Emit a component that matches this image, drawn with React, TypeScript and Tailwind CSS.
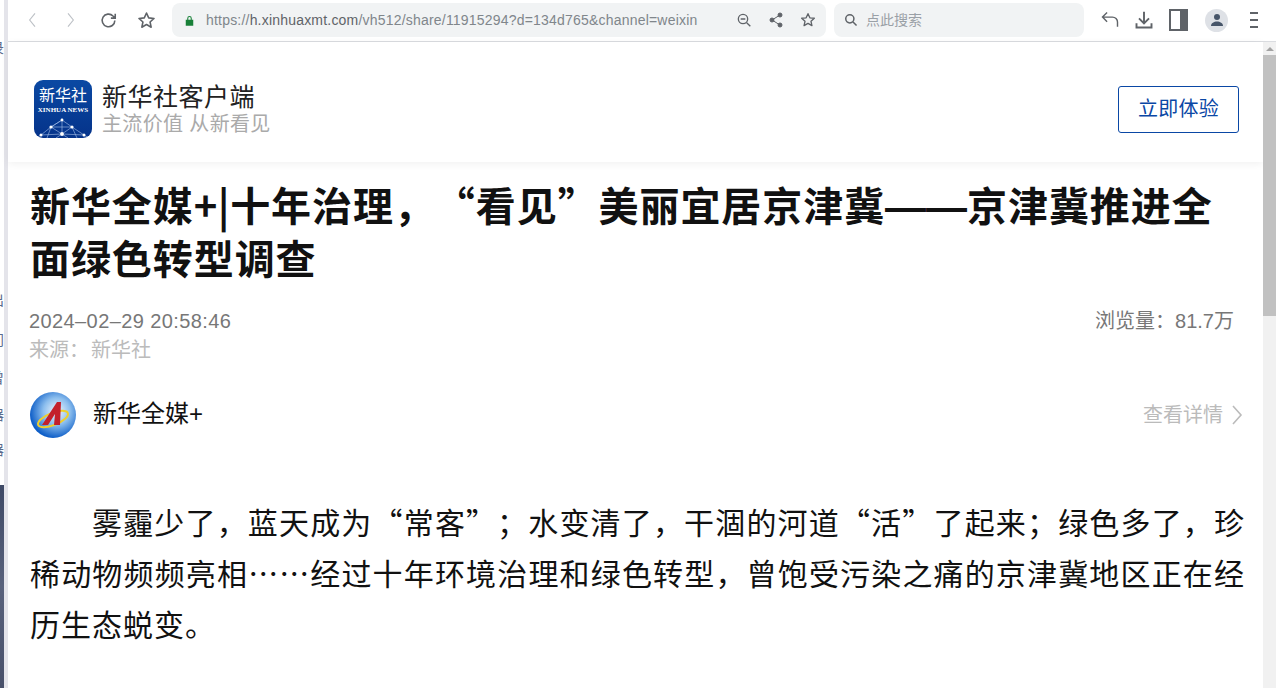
import React from "react";

const cjk = "font-['Liberation_Sans','Noto_Sans_CJK_SC',sans-serif]";
const cjkFirst = "font-['Noto_Sans_CJK_SC','Liberation_Sans',sans-serif]";
const latin = "font-['Liberation_Sans',sans-serif]";

const XinhuaLogo = () => (
  <div className="flex h-[58px] w-[58px] shrink-0 flex-col items-center overflow-hidden rounded-[9px] bg-gradient-to-b from-[#0b49a3] to-[#05338a]">
    <span className="mt-[6px] text-[16px] leading-[20px] text-white">新华社</span>
    <span className="font-['Liberation_Serif',serif] text-[7px] leading-[8px] font-bold whitespace-nowrap text-white">XINHUA NEWS</span>
    <svg viewBox="0 0 58 24" className="h-[24px] w-[58px]" stroke="#a9c3ea" strokeWidth="0.6" fill="none">
      <path d="M7 21 17 13 28 6 38 13 50 21M17 13 28 20 38 13M17 13 28 6M7 21 28 20 50 21M28 6V20M17 13 13 24M38 13 43 24M7 21 2 24M50 21 55 24M17 13H38M28 20 22 24M28 20 34 24" />
      <g fill="#fff" stroke="none">
        <circle cx="28" cy="6" r="1.4" />
        <circle cx="17" cy="13" r="1.6" />
        <circle cx="38" cy="13" r="1.6" />
        <circle cx="7" cy="21" r="1.5" />
        <circle cx="28" cy="20" r="1.9" />
        <circle cx="50" cy="21" r="1.5" />
      </g>
    </svg>
  </div>
);

const MediaLogo = () => (
  <svg viewBox="0 0 46 46" className="h-[46px] w-[46px] shrink-0">
    <defs>
      <radialGradient id="mediaBg" cx="58%" cy="42%" r="58%">
        <stop offset="0" stopColor="#f2f7fd" />
        <stop offset="0.5" stopColor="#8dbfee" />
        <stop offset="1" stopColor="#0f5fc8" />
      </radialGradient>
    </defs>
    <circle cx="23" cy="23" r="23" fill="url(#mediaBg)" />
    <ellipse cx="23" cy="27" rx="16" ry="6" fill="none" stroke="#efcf2c" strokeWidth="2" transform="rotate(-22 23 27)" />
    <path d="M12 33 27 10h4l-1 23h-6l1-11-7 11z" fill="#c3202b" />
  </svg>
);

const ToolIcon = ({ children, className = "" }: { children: React.ReactNode; className?: string }) => (
  <svg viewBox="0 0 24 24" className={className} fill="none" stroke="currentColor" strokeWidth="2">
    {children}
  </svg>
);

const Star = ({ className }: { className: string }) => (
  <ToolIcon className={className}>
    <path d="m12 2.500 2.800 6.200 6.700.7-5 4.500 1.400 6.600-5.900-3.400-5.900 3.400 1.400-6.600-5-4.500 6.700-.7z" strokeLinejoin="round" />
  </ToolIcon>
);

const Toolbar = () => (
  <div className="flex h-[42px] items-center border-b border-[#dadce0] bg-white pb-[1px]">
    <div className="flex w-[164px] items-center pl-[17px] text-[#5f6368]">
      <ToolIcon className="h-[16px] w-[16px] text-[#bdc1c6]"><path d="m15 2-8 10 8 10" strokeWidth="1.7" /></ToolIcon>
      <ToolIcon className="ml-[21px] h-[16px] w-[16px] text-[#bdc1c6]"><path d="m9 2 8 10-8 10" strokeWidth="1.7" /></ToolIcon>
      <ToolIcon className="ml-[21px] h-[19px] w-[19px]">
        <path d="M20 12a8 8 0 1 1-2.300-5.700L20.500 9M20.500 3.500V9H15" />
      </ToolIcon>
      <Star className="ml-[19px] h-[19px] w-[19px]" />
    </div>
    <div className="flex h-[34px] w-[654px] items-center rounded-[8px] bg-[#f1f3f4] pl-[13px]">
      <svg viewBox="0 0 12 14" className="h-[11px] w-[9px] shrink-0" fill="#188038">
        <path d="M1 6h10v8H1zM3 6V4a3 3 0 0 1 6 0v2H7.600V4a1.600 1.600 0 0 0-3.200 0v2z" />
      </svg>
      <span className={`ml-[12px] w-[514px] text-[14px] tracking-[0.2px] whitespace-nowrap text-[#80868b] ${latin}`}>
        https://<span className="text-[#5f6368]">h.xinhuaxmt.com</span>/vh512/share/11915294?d=134d765&amp;channel=weixin
      </span>
      <ToolIcon className="ml-[16px] h-[16px] w-[16px] text-[#5f6368]">
        <circle cx="10.500" cy="10.500" r="7" /><path d="m16 16 5.500 5.500M7 10.500h7" />
      </ToolIcon>
      <svg viewBox="0 0 16 16" className="ml-[16px] h-[16px] w-[16px] text-[#5f6368]" fill="currentColor" stroke="currentColor" strokeWidth="1">
        <path d="M12 3 4 8l8 5" fill="none" />
        <circle cx="12" cy="3" r="2" /><circle cx="4" cy="8" r="2" /><circle cx="12" cy="13" r="2" />
      </svg>
      <Star className="ml-[16px] h-[16px] w-[16px] text-[#5f6368]" />
    </div>
    <div className="ml-[8px] flex h-[34px] w-[250px] items-center rounded-[8px] bg-[#f1f3f4] pl-[10px]">
      <ToolIcon className="h-[14px] w-[14px] text-[#5f6368]">
        <circle cx="10" cy="10" r="7" strokeWidth="2.600" /><path d="m15.500 15.500 6 6" strokeWidth="2.600" />
      </ToolIcon>
      <span className={`ml-[8px] text-[14px] text-[#9aa0a6] ${cjk}`}>点此搜索</span>
    </div>
    <div className="flex flex-1 items-center pl-[16px] text-[#5f6368]">
      <ToolIcon className="h-[20px] w-[20px]"><path d="M8.500 3 3 8.500 8.500 14M3.500 8.500H15a6 6 0 0 1 6 6V20" strokeWidth="1.700" /></ToolIcon>
      <ToolIcon className="ml-[14px] h-[20px] w-[20px]"><path d="M12 2v14M6 10l6 6 6-6M3 16v5h18v-5" strokeWidth="2.300" /></ToolIcon>
      <div className="ml-[15px] flex h-[22px] w-[19px] items-center border-[2px] border-[#5f6368] bg-[#5f6368]">
        <div className="h-full w-[9px] bg-white" />
      </div>
      <div className="ml-[17px] flex h-[23px] w-[23px] items-center justify-center rounded-full bg-[#dee1e6]">
        <svg viewBox="0 0 14 14" className="h-[14px] w-[14px]" fill="#475569">
          <circle cx="7" cy="4" r="3" /><path d="M1 13c0-3 3-4.500 6-4.500s6 1.500 6 4.500z" />
        </svg>
      </div>
      <div className="ml-[22px] flex flex-col gap-[5px]">
        <div className="h-[2px] w-[8px] bg-[#5f6368]" />
        <div className="h-[2px] w-[8px] bg-[#5f6368]" />
        <div className="h-[2px] w-[8px] bg-[#5f6368]" />
      </div>
    </div>
  </div>
);

// what shows of the window behind the browser
const behindText = [
  { text: "录", height: "h-[56px]" },
  { text: "出", height: "h-[252px]" },
  { text: "门", height: "h-[40px]" },
  { text: "曾", height: "h-[38px]" },
  { text: "器", height: "h-[37px]" },
  { text: "器", height: "h-[35px]" },
];

const SideStrip = () => (
  <div className="flex h-full w-[8px] shrink-0">
    <div className="flex w-[4px] flex-col overflow-hidden bg-white">
      <div className="flex h-[485px] flex-col text-[14px] leading-[16px] text-[#5b6b8c]">
        {behindText.map((item, i) => (
          <div key={i} className={`flex ${item.height} shrink-0 items-end justify-end overflow-hidden`}>
            <span className="shrink-0">{item.text}</span>
          </div>
        ))}
      </div>
      <div className="flex-1 bg-gradient-to-b from-[#3f4a66] via-[#59627c] to-[#48506a]" />
    </div>
    <div className="w-[4px] bg-[#e4e4ea]" />
  </div>
);

const Scrollbar = () => (
  <div className="flex h-full w-[13px] shrink-0 flex-col items-center bg-[#f1f1f1] pt-[5px]">
    <div className="h-0 w-0 border-x-[4px] border-b-[4px] border-x-transparent border-b-[#a3a3a3]" />
    <div className="mt-[4px] h-[261px] w-full bg-[#c1c1c1]" />
  </div>
);

export default function App() {
  return (
    <div className={`flex h-[688px] w-[1276px] flex-col overflow-hidden bg-white ${cjk}`}>
      <div className="flex h-full">
        <SideStrip />
        <div className="flex min-w-0 flex-1 flex-col">
          <Toolbar />
          <div className="flex min-h-0 flex-1">
            <main className="min-w-0 flex-1">
              {/* app banner */}
              <header className="flex h-[120px] items-center justify-between pr-[24px] pl-[26px] shadow-[0_2px_8px_rgba(0,0,0,0.06)]">
                <div className="flex items-center gap-[10px] pt-[14px]">
                  <XinhuaLogo />
                  <div>
                    <div className="text-[25px] leading-[30px] tracking-[0.5px] text-[#222]">新华社客户端</div>
                    <div className="text-[20px] leading-[24px] tracking-[0.35px] text-[#aaa]">主流价值 从新看见</div>
                  </div>
                </div>
                <button className="mt-[14px] h-[47px] w-[121px] rounded-[3px] border border-[#0a47a5] text-[20px] tracking-[0.3px] text-[#0a47a5]">立即体验</button>
              </header>

              {/* article */}
              <article className="pr-[18px] pl-[22px]">
                <h1 className={`mt-[16px] text-[40px] leading-[53px] font-bold tracking-[0.93px] text-[#111] [text-spacing-trim:space-all] ${cjkFirst}`}>
                  新华全媒<span className="tracking-[0.5px]">+|</span>十年治理，“看见”美丽宜居京津冀<span className={`text-[41px] leading-none tracking-normal ${latin}`}>——</span>京津冀推进全面绿色转型调查
                </h1>
                <div className="mt-[23px] -ml-[1px] flex justify-between pr-[11px] text-[20px] leading-[28px] text-[#777]">
                  <span className="tracking-[0.4px]">2024–02–29 20:58:46</span>
                  <span>浏览量：81.7万</span>
                </div>
                <div className="mt-[2px] -ml-[1px] text-[20px] leading-[26px] text-[#bbb]">
                  来源：<span className="ml-[2px]">新华社</span>
                </div>

                <div className="mt-[29px] flex h-[46px] items-center justify-between">
                  <div className="flex items-center gap-[17px]">
                    <MediaLogo />
                    <span className="pb-[3px] text-[24px] text-[#111]">新华全媒+</span>
                  </div>
                  <div className="flex items-center pb-[1px] text-[20px] text-[#bbb]">
                    查看详情
                    <svg viewBox="0 0 14 22" className="ml-[8px] h-[22px] w-[14px]" fill="none" stroke="currentColor" strokeWidth="1.600">
                      <path d="m2 2 8 9-8 9" />
                    </svg>
                  </div>
                </div>

                <p className={`mt-[58px] text-justify text-[30px] leading-[51px] tracking-[1px] text-[#111] [text-indent:62px] [text-spacing-trim:space-all] ${cjkFirst}`}>
                  雾霾少了，蓝天成为“常客”；水变清了，干涸的河道“活”了起来；绿色多了，珍稀动物频频亮相……经过十年环境治理和绿色转型，曾饱受污染之痛的京津冀地区正在经历生态蜕变。
                </p>
              </article>
            </main>
            <Scrollbar />
          </div>
        </div>
      </div>
    </div>
  );
}
